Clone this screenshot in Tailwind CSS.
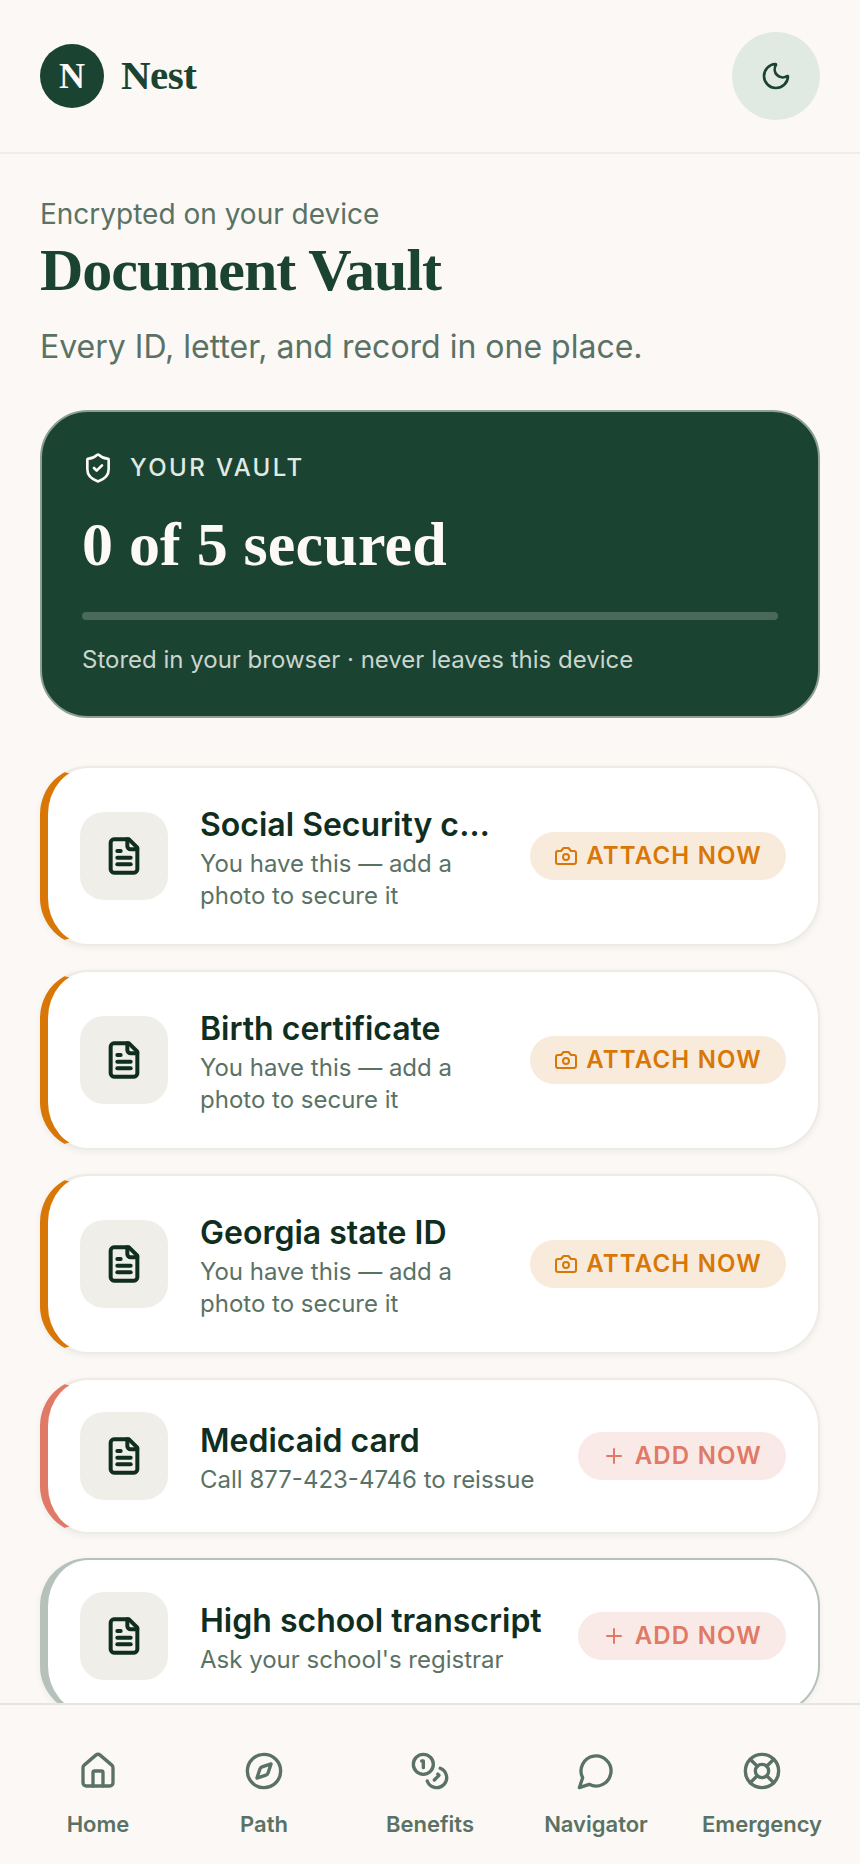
<!DOCTYPE html>
<html lang="en">
<head>
    <meta charset="UTF-8">
    <meta name="viewport" content="width=device-width, initial-scale=1.0">
    <title>Nest - Document Vault</title>
    <script src="https://cdn.jsdelivr.net/npm/@tailwindcss/browser@4"></script>
</head>
<body class="bg-[#fbf8f5] font-[Inter,sans-serif]">
<div class="flex flex-col h-[1864px] overflow-hidden">

    <!-- Header -->
    <header class="flex items-center justify-between px-10 py-8 border-b-2 border-[#f0eee8] h-[154px] shrink-0">
        <div class="flex items-center gap-[17px]">
            <div class="w-16 h-16 rounded-full bg-[#1b4332] flex items-center justify-center text-[#fcf9f6] text-[36px] font-bold font-['Liberation_Serif',serif]">N</div>
            <span class="text-[41px] font-bold text-[#1b4332] font-['Liberation_Serif',serif] tracking-[-0.5px]">Nest</span>
        </div>
        <button class="w-[88px] h-[88px] rounded-full bg-[#e0eae3] flex items-center justify-center text-[#1b4332]">
            <svg class="w-8 h-8" viewBox="0 0 24 24" fill="none" stroke="currentColor" stroke-width="2" stroke-linecap="round" stroke-linejoin="round"><path d="M20.985 12.486a9 9 0 1 1-9.473-9.472c.405-.022.617.46.402.803a6 6 0 0 0 8.268 8.268c.344-.215.825-.004.803.401"/></svg>
        </button>
    </header>

    <!-- Main -->
    <main class="flex-1 min-h-0 overflow-hidden px-10 pt-10">
        <p class="text-[28px] leading-10 text-[#5a7265]">Encrypted on your device</p>
        <h1 class="text-[60px] leading-[72px] font-bold tracking-[-1px] text-[#1b4332] font-['Liberation_Serif',serif]">Document Vault</h1>
        <p class="mt-[19px] text-[32px] leading-[44px] text-[#5a7265]">Every ID, letter, and record in one place.</p>

        <!-- Vault summary -->
        <section class="mt-[41px] h-[308px] rounded-[48px] border-2 border-[#8e9f95] bg-[#1b4332] p-10">
            <div class="flex items-center gap-4 text-[#e0eae3]">
                <svg class="w-8 h-8 text-[#fcf9f6]" viewBox="0 0 24 24" fill="none" stroke="currentColor" stroke-width="2" stroke-linecap="round" stroke-linejoin="round"><path d="M20 13c0 5-3.5 7.5-7.66 8.95a1 1 0 0 1-.67-.01C7.5 20.5 4 18 4 13V6a1 1 0 0 1 1-1c2 0 4.5-1.2 6.24-2.72a1.17 1.17 0 0 1 1.52 0C14.51 3.81 17 5 19 5a1 1 0 0 1 1 1z"/><path d="m9 12 2 2 4-4"/></svg>
                <span class="text-[24px] leading-8 font-medium tracking-[2.4px]">YOUR VAULT</span>
            </div>
            <div class="mt-6 text-[62px] leading-[72px] font-bold tracking-[0.2px] text-[#fcf9f6] font-['Liberation_Serif',serif]">0 of 5 secured</div>
            <div class="mt-8 h-2 rounded-full bg-[#496a5b]"></div>
            <p class="mt-6 text-[24px] leading-8 text-[#c9d6ce]">Stored in your browser · never leaves this device</p>
        </section>

        <!-- Document list -->
        <div class="mt-12 flex flex-col gap-6">

            <div class="flex items-center gap-8 rounded-[48px] bg-white border-2 border-l-8 border-[#eeebe4] border-l-[#d97706] py-8 pl-8 pr-8 shadow-[0_2px_6px_rgba(27,67,50,0.06)]">
                <div class="w-[88px] h-[88px] shrink-0 rounded-3xl bg-[#f0eee8] flex items-center justify-center text-[#0f2e20]">
                    <svg class="w-10 h-10" viewBox="0 0 24 24" fill="none" stroke="currentColor" stroke-width="2.4" stroke-linecap="round" stroke-linejoin="round"><path d="M15 2H6a2 2 0 0 0-2 2v16a2 2 0 0 0 2 2h12a2 2 0 0 0 2-2V7Z"/><path d="M14 2v4a2 2 0 0 0 2 2h4"/><path d="M10 9H8"/><path d="M16 13H8"/><path d="M16 17H8"/></svg>
                </div>
                <div class="flex-1 min-w-0">
                    <h3 class="pt-[2px] text-[32px] leading-[46px] font-semibold text-[#0f2e20] truncate">Social Security card</h3>
                    <p class="text-[24px] leading-8 text-[#5a7265]">You have this — add a photo to secure it</p>
                </div>
                <button class="shrink-0 flex items-center gap-2 h-12 px-6 rounded-full bg-[#f8ebdc] text-[#d97706] text-[24px] font-semibold tracking-[1.2px]">
                    <svg class="w-6 h-6" viewBox="0 0 24 24" fill="none" stroke="currentColor" stroke-width="2" stroke-linecap="round" stroke-linejoin="round"><path d="M14.5 4h-5L7 7H4a2 2 0 0 0-2 2v9a2 2 0 0 0 2 2h16a2 2 0 0 0 2-2V9a2 2 0 0 0-2-2h-3l-2.5-3z"/><circle cx="12" cy="13" r="3"/></svg>
                    ATTACH NOW
                </button>
            </div>

            <div class="flex items-center gap-8 rounded-[48px] bg-white border-2 border-l-8 border-[#eeebe4] border-l-[#d97706] py-8 pl-8 pr-8 shadow-[0_2px_6px_rgba(27,67,50,0.06)]">
                <div class="w-[88px] h-[88px] shrink-0 rounded-3xl bg-[#f0eee8] flex items-center justify-center text-[#0f2e20]">
                    <svg class="w-10 h-10" viewBox="0 0 24 24" fill="none" stroke="currentColor" stroke-width="2.4" stroke-linecap="round" stroke-linejoin="round"><path d="M15 2H6a2 2 0 0 0-2 2v16a2 2 0 0 0 2 2h12a2 2 0 0 0 2-2V7Z"/><path d="M14 2v4a2 2 0 0 0 2 2h4"/><path d="M10 9H8"/><path d="M16 13H8"/><path d="M16 17H8"/></svg>
                </div>
                <div class="flex-1 min-w-0">
                    <h3 class="pt-[2px] text-[32px] leading-[46px] font-semibold text-[#0f2e20] truncate">Birth certificate</h3>
                    <p class="text-[24px] leading-8 text-[#5a7265]">You have this — add a photo to secure it</p>
                </div>
                <button class="shrink-0 flex items-center gap-2 h-12 px-6 rounded-full bg-[#f8ebdc] text-[#d97706] text-[24px] font-semibold tracking-[1.2px]">
                    <svg class="w-6 h-6" viewBox="0 0 24 24" fill="none" stroke="currentColor" stroke-width="2" stroke-linecap="round" stroke-linejoin="round"><path d="M14.5 4h-5L7 7H4a2 2 0 0 0-2 2v9a2 2 0 0 0 2 2h16a2 2 0 0 0 2-2V9a2 2 0 0 0-2-2h-3l-2.5-3z"/><circle cx="12" cy="13" r="3"/></svg>
                    ATTACH NOW
                </button>
            </div>

            <div class="flex items-center gap-8 rounded-[48px] bg-white border-2 border-l-8 border-[#eeebe4] border-l-[#d97706] py-8 pl-8 pr-8 shadow-[0_2px_6px_rgba(27,67,50,0.06)]">
                <div class="w-[88px] h-[88px] shrink-0 rounded-3xl bg-[#f0eee8] flex items-center justify-center text-[#0f2e20]">
                    <svg class="w-10 h-10" viewBox="0 0 24 24" fill="none" stroke="currentColor" stroke-width="2.4" stroke-linecap="round" stroke-linejoin="round"><path d="M15 2H6a2 2 0 0 0-2 2v16a2 2 0 0 0 2 2h12a2 2 0 0 0 2-2V7Z"/><path d="M14 2v4a2 2 0 0 0 2 2h4"/><path d="M10 9H8"/><path d="M16 13H8"/><path d="M16 17H8"/></svg>
                </div>
                <div class="flex-1 min-w-0">
                    <h3 class="pt-[2px] text-[32px] leading-[46px] font-semibold text-[#0f2e20] truncate">Georgia state ID</h3>
                    <p class="text-[24px] leading-8 text-[#5a7265]">You have this — add a photo to secure it</p>
                </div>
                <button class="shrink-0 flex items-center gap-2 h-12 px-6 rounded-full bg-[#f8ebdc] text-[#d97706] text-[24px] font-semibold tracking-[1.2px]">
                    <svg class="w-6 h-6" viewBox="0 0 24 24" fill="none" stroke="currentColor" stroke-width="2" stroke-linecap="round" stroke-linejoin="round"><path d="M14.5 4h-5L7 7H4a2 2 0 0 0-2 2v9a2 2 0 0 0 2 2h16a2 2 0 0 0 2-2V9a2 2 0 0 0-2-2h-3l-2.5-3z"/><circle cx="12" cy="13" r="3"/></svg>
                    ATTACH NOW
                </button>
            </div>

            <div class="flex items-center gap-8 rounded-[48px] bg-white border-2 border-l-8 border-[#eeebe4] border-l-[#e07a66] py-8 pl-8 pr-8 shadow-[0_2px_6px_rgba(27,67,50,0.06)]">
                <div class="w-[88px] h-[88px] shrink-0 rounded-3xl bg-[#f0eee8] flex items-center justify-center text-[#0f2e20]">
                    <svg class="w-10 h-10" viewBox="0 0 24 24" fill="none" stroke="currentColor" stroke-width="2.4" stroke-linecap="round" stroke-linejoin="round"><path d="M15 2H6a2 2 0 0 0-2 2v16a2 2 0 0 0 2 2h12a2 2 0 0 0 2-2V7Z"/><path d="M14 2v4a2 2 0 0 0 2 2h4"/><path d="M10 9H8"/><path d="M16 13H8"/><path d="M16 17H8"/></svg>
                </div>
                <div class="flex-1 min-w-0">
                    <h3 class="pt-[2px] text-[32px] leading-[46px] font-semibold text-[#0f2e20] truncate">Medicaid card</h3>
                    <p class="text-[24px] leading-8 text-[#5a7265]">Call 877-423-4746 to reissue</p>
                </div>
                <button class="shrink-0 flex items-center gap-[9px] h-12 px-6 rounded-full bg-[#f9eae7] text-[#e07a66] text-[24px] font-semibold tracking-[1.2px]">
                    <svg class="w-6 h-6" viewBox="0 0 24 24" fill="none" stroke="currentColor" stroke-width="2" stroke-linecap="round" stroke-linejoin="round"><path d="M5 12h14"/><path d="M12 5v14"/></svg>
                    ADD NOW
                </button>
            </div>

            <div class="flex items-center gap-8 rounded-[48px] bg-white border-2 border-l-8 border-[#b5c1ba] py-8 pl-8 pr-8 shadow-[0_2px_6px_rgba(27,67,50,0.06)]">
                <div class="w-[88px] h-[88px] shrink-0 rounded-3xl bg-[#f0eee8] flex items-center justify-center text-[#0f2e20]">
                    <svg class="w-10 h-10" viewBox="0 0 24 24" fill="none" stroke="currentColor" stroke-width="2.4" stroke-linecap="round" stroke-linejoin="round"><path d="M15 2H6a2 2 0 0 0-2 2v16a2 2 0 0 0 2 2h12a2 2 0 0 0 2-2V7Z"/><path d="M14 2v4a2 2 0 0 0 2 2h4"/><path d="M10 9H8"/><path d="M16 13H8"/><path d="M16 17H8"/></svg>
                </div>
                <div class="flex-1 min-w-0">
                    <h3 class="pt-[2px] text-[32px] leading-[46px] font-semibold text-[#0f2e20] truncate">High school transcript</h3>
                    <p class="text-[24px] leading-8 text-[#5a7265]">Ask your school's registrar</p>
                </div>
                <button class="shrink-0 flex items-center gap-[9px] h-12 px-6 rounded-full bg-[#f9eae7] text-[#e07a66] text-[24px] font-semibold tracking-[1.2px]">
                    <svg class="w-6 h-6" viewBox="0 0 24 24" fill="none" stroke="currentColor" stroke-width="2" stroke-linecap="round" stroke-linejoin="round"><path d="M5 12h14"/><path d="M12 5v14"/></svg>
                    ADD NOW
                </button>
            </div>
        </div>
    </main>

    <!-- Bottom nav -->
    <nav class="shrink-0 h-[161px] border-t-2 border-[#e4e7df] bg-[#fbf8f5] grid grid-cols-5 px-[15px] pt-[46px] text-[#5a7265]">
        <a class="flex flex-col items-center gap-[19px]">
            <svg class="w-10 h-10" viewBox="0 0 24 24" fill="none" stroke="currentColor" stroke-width="2" stroke-linecap="round" stroke-linejoin="round"><path d="M15 21v-8a1 1 0 0 0-1-1h-4a1 1 0 0 0-1 1v8"/><path d="M3 10a2 2 0 0 1 .709-1.528l7-5.999a2 2 0 0 1 2.582 0l7 5.999A2 2 0 0 1 21 10v9a2 2 0 0 1-2 2H5a2 2 0 0 1-2-2z"/></svg>
            <span class="text-[22px] leading-7 font-semibold">Home</span>
        </a>
        <a class="flex flex-col items-center gap-[19px]">
            <svg class="w-10 h-10" viewBox="0 0 24 24" fill="none" stroke="currentColor" stroke-width="2" stroke-linecap="round" stroke-linejoin="round"><circle cx="12" cy="12" r="10"/><path d="m16.24 7.76-1.804 5.411a2 2 0 0 1-1.265 1.265L7.76 16.24l1.804-5.411a2 2 0 0 1 1.265-1.265z"/></svg>
            <span class="text-[22px] leading-7 font-semibold">Path</span>
        </a>
        <a class="flex flex-col items-center gap-[19px]">
            <svg class="w-10 h-10" viewBox="0 0 24 24" fill="none" stroke="currentColor" stroke-width="2" stroke-linecap="round" stroke-linejoin="round"><circle cx="8" cy="8" r="6"/><path d="M18.09 10.37A6 6 0 1 1 10.34 18"/><path d="M7 6h1v4"/><path d="m16.71 13.88.7.71-2.82 2.82"/></svg>
            <span class="text-[22px] leading-7 font-semibold">Benefits</span>
        </a>
        <a class="flex flex-col items-center gap-[19px]">
            <svg class="w-10 h-10" viewBox="0 0 24 24" fill="none" stroke="currentColor" stroke-width="2" stroke-linecap="round" stroke-linejoin="round"><path d="M7.9 20A9 9 0 1 0 4 16.1L2 22Z"/></svg>
            <span class="text-[22px] leading-7 font-semibold">Navigator</span>
        </a>
        <a class="flex flex-col items-center gap-[19px]">
            <svg class="w-10 h-10" viewBox="0 0 24 24" fill="none" stroke="currentColor" stroke-width="2" stroke-linecap="round" stroke-linejoin="round"><circle cx="12" cy="12" r="10"/><path d="m4.93 4.93 4.24 4.24"/><path d="m14.83 9.17 4.24-4.24"/><path d="m14.83 14.83 4.24 4.24"/><path d="m9.17 14.83-4.24 4.24"/><circle cx="12" cy="12" r="4"/></svg>
            <span class="text-[22px] leading-7 font-semibold">Emergency</span>
        </a>
    </nav>
</div>
</body>
</html>
